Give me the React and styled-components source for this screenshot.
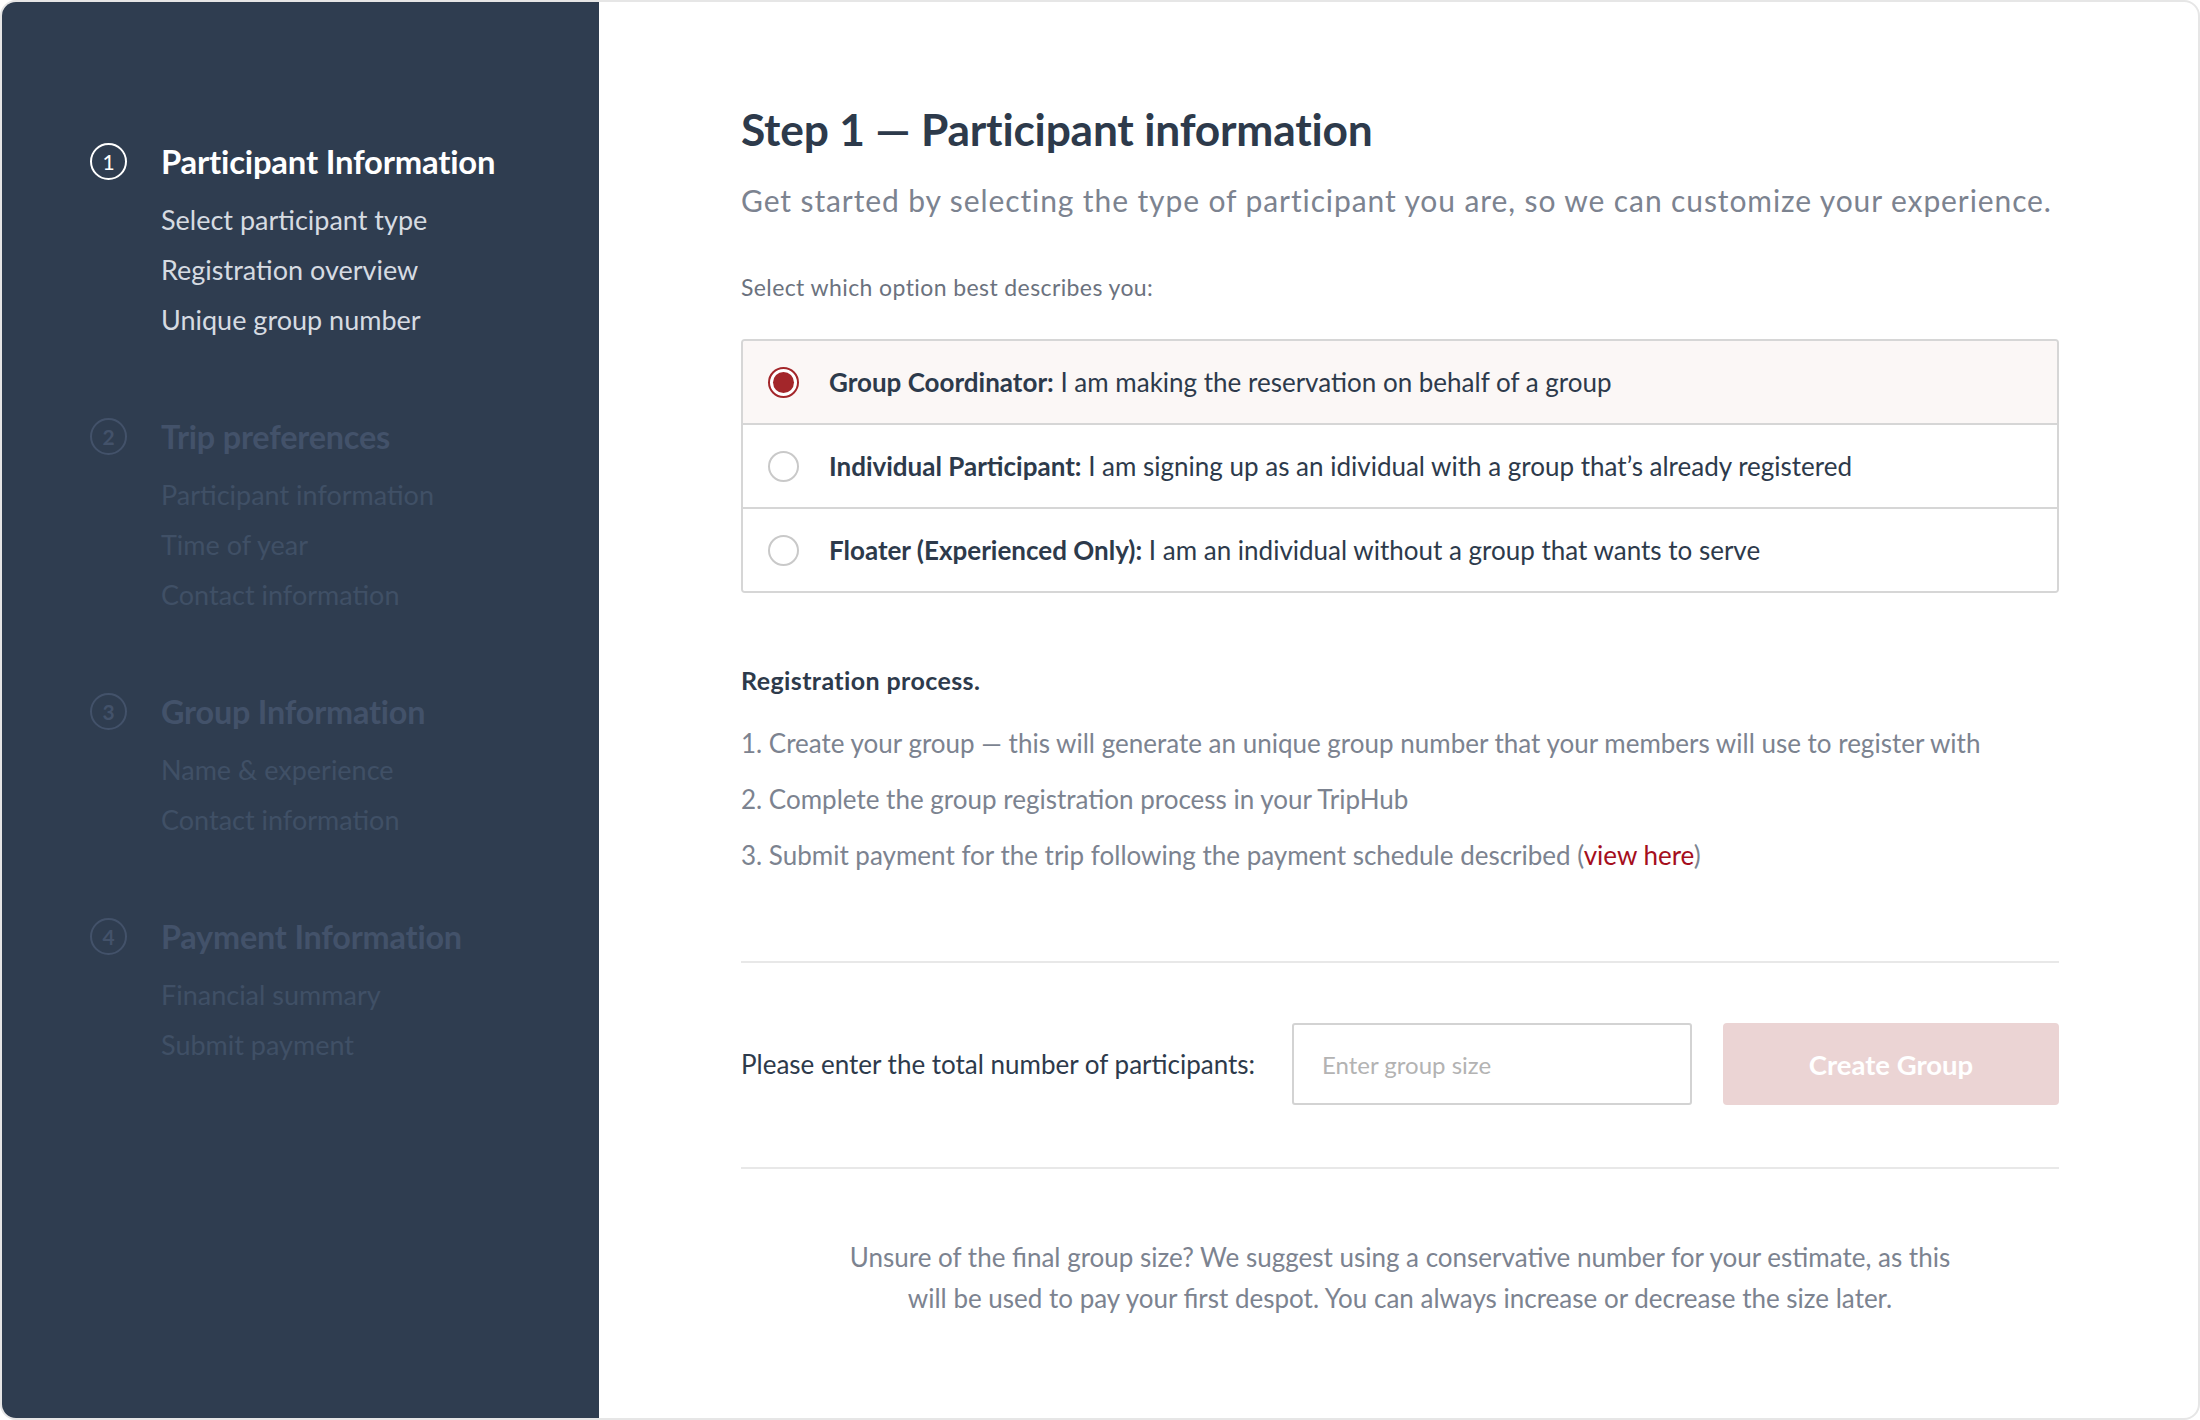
import React from "react";
import styled, { createGlobalStyle } from "styled-components";

const GlobalStyle = createGlobalStyle`
  * { box-sizing: border-box; }
  html, body { margin: 0; padding: 0; background: #ffffff; }
  body { font-family: Lato, "Open Sans", sans-serif; }
`;

const steps = [
  {
    num: 1,
    title: "Participant Information",
    items: ["Select participant type", "Registration overview", "Unique group number"],
    active: true,
  },
  {
    num: 2,
    title: "Trip preferences",
    items: ["Participant information", "Time of year", "Contact information"],
  },
  {
    num: 3,
    title: "Group Information",
    items: ["Name & experience", "Contact information"],
  },
  {
    num: 4,
    title: "Payment Information",
    items: ["Financial summary", "Submit payment"],
  },
];

const options = [
  {
    label: "Group Coordinator:",
    text: "I am making the reservation on behalf of a group",
    checked: true,
  },
  {
    label: "Individual Participant:",
    text: "I am signing up as an idividual with a group that\u2019s already registered",
  },
  {
    label: "Floater (Experienced Only):",
    text: "I am an individual without a group that wants to serve",
  },
];

const App = () => {
  return (
    <>
      <GlobalStyle />
      <Card>
        <Sidebar>
          {steps.map((s) => (
            <StepGroup key={s.num}>
              <StepHeader $active={s.active}>
                <StepNum $active={s.active}>{s.num}</StepNum>
                <StepTitle $active={s.active}>{s.title}</StepTitle>
              </StepHeader>
              <SubList>
                {s.items.map((item) => (
                  <SubItem key={item} $active={s.active}>
                    {item}
                  </SubItem>
                ))}
              </SubList>
            </StepGroup>
          ))}
        </Sidebar>

        <Main>
          <Heading>Step 1 — Participant information</Heading>
          <Lead>
            Get started by selecting the type of participant you are, so we can
            customize your experience.
          </Lead>
          <Prompt>Select which option best describes you:</Prompt>

          <OptionBox>
            {options.map((o) => (
              <OptionRow key={o.label} $checked={o.checked}>
                <Radio $checked={o.checked} />
                <OptionText>
                  <strong>{o.label}</strong> {o.text}
                </OptionText>
              </OptionRow>
            ))}
          </OptionBox>

          <SectionTitle>Registration process.</SectionTitle>
          <ProcessList>
            <li>
              1. Create your group — this will generate an unique group number
              that your members will use to register with
            </li>
            <li>2. Complete the group registration process in your TripHub</li>
            <li>
              3. Submit payment for the trip following the payment schedule
              described (<Link href="#">view here</Link>)
            </li>
          </ProcessList>

          <Divider />

          <FormRow>
            <FieldLabel>Please enter the total number of participants:</FieldLabel>
            <SizeInput type="text" placeholder="Enter group size" />
            <CreateButton disabled>Create Group</CreateButton>
          </FormRow>

          <Divider />

          <Note>
            Unsure of the final group size? We suggest using a conservative
            number for your estimate, as this
            <br />
            will be used to pay your first despot. You can always increase or
            decrease the size later.
          </Note>
        </Main>
      </Card>
    </>
  );
};

const Card = styled.div`
  width: 2200px;
  height: 1420px;
  display: flex;
  border: 2px solid #e6e6e6;
  border-radius: 16px;
  overflow: hidden;
  background: #ffffff;
`;

const Sidebar = styled.aside`
  width: 597px;
  flex-shrink: 0;
  background: #2f3d50;
  padding: 139px 0 0 88px;
  display: flex;
  flex-direction: column;
  gap: 71px;
`;

const StepGroup = styled.div`
  display: flex;
  flex-direction: column;
`;

const StepHeader = styled.div`
  display: flex;
  align-items: center;
  height: 40px;
  color: ${({ $active }) => ($active ? "#ffffff" : "#43526a")};
`;

const StepNum = styled.span`
  width: 37px;
  height: 37px;
  border-radius: 50%;
  border: 2px solid currentColor;
  display: flex;
  align-items: center;
  justify-content: center;
  font-size: 21px;
  font-weight: ${({ $active }) => ($active ? 400 : 700)};
  line-height: 1;
  margin-right: 34px;
`;

const StepTitle = styled.span`
  font-size: ${({ $active }) => ($active ? "32.8px" : "32.4px")};
  font-weight: 700;
  letter-spacing: -0.2px;
`;

const SubList = styled.ul`
  list-style: none;
  margin: 14px 0 0 71px;
  padding: 0;
`;

const SubItem = styled.li`
  font-size: 27px;
  line-height: 50px;
  color: ${({ $active }) => ($active ? "#d6dbe2" : "#405066")};
`;

const Main = styled.main`
  flex: 1;
  padding: 101px 139px 0 142px;
  display: flex;
  flex-direction: column;
`;

const Heading = styled.h1`
  margin: 0;
  font-size: 44.3px;
  line-height: 52px;
  font-weight: 700;
  color: #2d3a4b;
  letter-spacing: -0.2px;
`;

const Lead = styled.p`
  margin: 25px 0 0;
  font-size: 30px;
  line-height: 40px;
  letter-spacing: 0.9px;
  color: #7c8390;
`;

const Prompt = styled.p`
  margin: 52px 0 0;
  font-size: 23px;
  line-height: 30px;
  letter-spacing: 0.4px;
  color: #6b727e;
`;

const OptionBox = styled.div`
  margin-top: 37px;
  border: 2px solid #d6d6d6;
  border-radius: 4px;
  overflow: hidden;
`;

const OptionRow = styled.label`
  box-sizing: content-box;
  display: flex;
  align-items: center;
  height: 82px;
  padding-left: 25px;
  background: ${({ $checked }) => ($checked ? "#fbf7f6" : "#ffffff")};
  & + & {
    border-top: 2px solid #d6d6d6;
  }
`;

const Radio = styled.span`
  position: relative;
  width: 31px;
  height: 31px;
  flex-shrink: 0;
  border-radius: 50%;
  border: 2px solid ${({ $checked }) => ($checked ? "#a3262a" : "#c9c9c9")};
  background: #ffffff;
  margin-right: 30px;
  &::after {
    content: "";
    position: absolute;
    inset: 3px;
    border-radius: 50%;
    background: #a3262a;
    display: ${({ $checked }) => ($checked ? "block" : "none")};
  }
`;

const OptionText = styled.span`
  font-size: 26px;
  color: #2d3a4b;
  strong {
    font-weight: 700;
  }
`;

const SectionTitle = styled.h3`
  margin: 71px 0 0;
  font-size: 25px;
  line-height: 32px;
  letter-spacing: 0.4px;
  font-weight: 700;
  color: #2d3a4b;
`;

const ProcessList = styled.ul`
  list-style: none;
  margin: 19px 0 0;
  padding: 0;
  li {
    font-size: 26px;
    line-height: 56px;
    color: #7c8390;
  }
`;

const Link = styled.a`
  color: #a50e1c;
  text-decoration: none;
`;

const Divider = styled.hr`
  margin: 78px 0 0;
  border: 0;
  height: 2px;
  background: #e8e8e8;
`;

const FormRow = styled.div`
  display: grid;
  grid-template-columns: 1fr 400px 336px;
  column-gap: 31px;
  align-items: center;
  margin-top: 60px;

  & + hr {
    margin-top: 62px;
  }
`;

const FieldLabel = styled.span`
  font-size: 26px;
  color: #2d3a4b;
`;

const SizeInput = styled.input`
  height: 82px;
  border: 2px solid #d3d3d3;
  border-radius: 3px;
  padding: 0 28px;
  font-family: inherit;
  font-size: 24px;
  color: #2d3a4b;
  outline: none;
  &::placeholder {
    color: #b3b3b3;
  }
`;

const CreateButton = styled.button`
  height: 82px;
  border: 0;
  border-radius: 4px;
  background: #ebd4d4;
  color: #ffffff;
  font-family: inherit;
  font-size: 27.5px;
  font-weight: 700;
`;

const Note = styled.p`
  margin: 68px 0 0;
  text-align: center;
  font-size: 26px;
  line-height: 41px;
  color: #7c8390;
`;

export default App;
